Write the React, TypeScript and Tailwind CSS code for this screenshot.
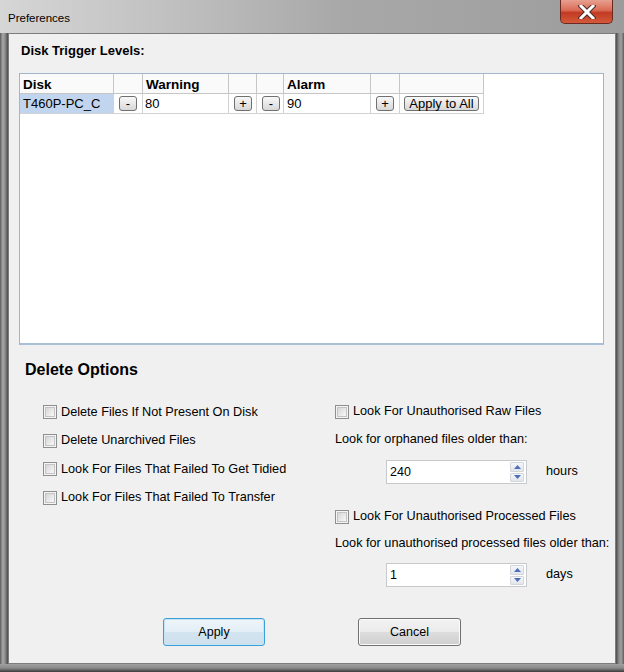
import React from "react";

function MiniBtn({ children, w }: { children: React.ReactNode; w: string }) {
  return (
    <div
      className={`${w} h-[15px] flex items-center justify-center rounded-[3px] border border-[#707070] bg-[linear-gradient(180deg,#f8f8f8_0%,#e8e8e8_50%,#d8d8d8_100%)] text-[13px] leading-none text-black`}
    >
      {children}
    </div>
  );
}

function Checkbox() {
  return (
    <div className="w-[14px] h-[14px] border border-[#8e8f8f] bg-[#f4f4f4] p-[1px] shrink-0">
      <div className="w-full h-full border border-[#c4c4c4] bg-[linear-gradient(135deg,#d6d6d6,#f8f8f8)]" />
    </div>
  );
}

function Spin({ value }: { value: string }) {
  return (
    <div className="w-[141px] h-[24px] border border-[#c7c9cd] bg-white flex items-center">
      <div className="flex-1 pl-[3px] text-[12.5px] text-black">{value}</div>
      <div className="w-[14px] h-[20px] mr-[2px] flex flex-col gap-[1px]">
        <div className="flex-1 flex items-center justify-center border border-[#d3d6db] bg-[linear-gradient(180deg,#f4f6f9,#e2e6ec)] rounded-[1px]">
          <svg width="7" height="4" viewBox="0 0 7 4">
            <path d="M0 4 L3.5 0 L7 4 Z" fill="#4c6fb8" />
          </svg>
        </div>
        <div className="flex-1 flex items-center justify-center border border-[#d3d6db] bg-[linear-gradient(180deg,#f4f6f9,#e2e6ec)] rounded-[1px]">
          <svg width="7" height="4" viewBox="0 0 7 4">
            <path d="M0 0 L3.5 4 L7 0 Z" fill="#4c6fb8" />
          </svg>
        </div>
      </div>
    </div>
  );
}

export default function App() {
  const hc = "h-[20px] border-r border-b border-[#c6c6c6] flex items-end px-[3px] text-[13.5px] font-bold leading-[16px] text-black";
  const dc = "h-[20px] border-r border-b border-[#d2d2d2] flex items-center text-[13px] text-black";
  return (
    <div className="w-[624px] h-[672px] flex flex-col overflow-hidden font-['Liberation_Sans',Arial,sans-serif] bg-[linear-gradient(90deg,#d6d6d6_0%,#c2c2c2_25%,#a8a8a8_55%,#a2a2a2_80%,#9c9c9c_100%)]">
      {/* Title bar */}
      <div className="h-[33px] flex items-start shrink-0">
        <div className="pl-[8px] pt-[10px] text-[11.5px] leading-[16px] text-black">Preferences</div>
        <div className="ml-auto mr-[11px] w-[53px] h-[24px] rounded-b-[5px] border border-t-0 border-[#6b2a20] bg-[linear-gradient(180deg,#e8a090_0%,#d96a55_45%,#c23a22_55%,#d45a3c_100%)] flex items-center justify-center">
          <svg width="18" height="14" viewBox="0 0 18 14">
            <path d="M3 1 L15 13 M15 1 L3 13" stroke="#4a2a25" strokeWidth="5" fill="none" strokeLinecap="square" />
            <path d="M3 1 L15 13 M15 1 L3 13" stroke="#ffffff" strokeWidth="3" fill="none" strokeLinecap="square" />
          </svg>
        </div>
      </div>

      {/* Body row */}
      <div className="flex flex-1">
        <div className="w-[8px] bg-[linear-gradient(90deg,#5c5c5c_0%,#a8a8a8_35%,#8a8a8a_65%,#4a4a4a_100%)]" />
        {/* Client area */}
        <div className="w-[608px] h-[631px] border border-[#7c7c7c] bg-[#f0f0f0] flex flex-col">
          <div className="pl-[12px] pt-[9px] text-[13px] font-bold leading-[16px] text-black">Disk Trigger Levels:</div>

          {/* Grid panel */}
          <div className="ml-[10px] mt-[14px] w-[585px] h-[272px] border border-[#a3b5c9] border-b-2 border-b-[#a9bfd6] bg-white">
            <div className="flex bg-[#fafafa] w-[464px]">
              <div className={`w-[94px] ${hc}`}>Disk</div>
              <div className={`w-[29px] ${hc}`} />
              <div className={`w-[86px] ${hc}`}>Warning</div>
              <div className={`w-[28px] ${hc}`} />
              <div className={`w-[27px] ${hc}`} />
              <div className={`w-[87px] ${hc}`}>Alarm</div>
              <div className={`w-[29px] ${hc}`} />
              <div className={`w-[84px] ${hc}`} />
            </div>
            <div className="flex w-[464px]">
              <div className={`w-[94px] ${dc} bg-[#c2d5ee] pl-[3px]`}>T460P-PC_C</div>
              <div className={`w-[29px] ${dc} pl-[5px]`}>
                <MiniBtn w="w-[18px]">-</MiniBtn>
              </div>
              <div className={`w-[86px] ${dc} pl-[2px]`}>80</div>
              <div className={`w-[28px] ${dc} pl-[5px]`}>
                <MiniBtn w="w-[18px]">+</MiniBtn>
              </div>
              <div className={`w-[27px] ${dc} pl-[5px]`}>
                <MiniBtn w="w-[18px]">-</MiniBtn>
              </div>
              <div className={`w-[87px] ${dc} pl-[3px]`}>90</div>
              <div className={`w-[29px] ${dc} pl-[5px]`}>
                <MiniBtn w="w-[18px]">+</MiniBtn>
              </div>
              <div className={`w-[84px] ${dc} pl-[4px]`}>
                <MiniBtn w="w-[75px]">Apply to All</MiniBtn>
              </div>
            </div>
          </div>

          <div className="pl-[16px] mt-[15px] text-[16px] font-bold leading-[19px] text-black">Delete Options</div>

          <div className="flex mt-[19px] pl-[34px] text-[12.7px] text-black">
            {/* Left column */}
            <div className="w-[292px] flex flex-col">
              {[
                "Delete Files If Not Present On Disk",
                "Delete Unarchived Files",
                "Look For Files That Failed To Get Tidied",
                "Look For Files That Failed To Transfer",
              ].map((t) => (
                <div key={t} className="h-[28.5px] flex items-center gap-[4px]">
                  <Checkbox />
                  <span>{t}</span>
                </div>
              ))}
            </div>
            {/* Right column */}
            <div className="flex flex-col">
              <div className="h-[28px] flex items-center gap-[4px]">
                <Checkbox />
                <span>Look For Unauthorised Raw Files</span>
              </div>
              <div className="h-[28px] flex items-center">Look for orphaned files older than:</div>
              <div className="mt-[6px] flex items-center pl-[51px]">
                <Spin value="240" />
                <span className="ml-[19px]">hours</span>
              </div>
              <div className="mt-[19px] h-[28px] flex items-center gap-[4px]">
                <Checkbox />
                <span>Look For Unauthorised Processed Files</span>
              </div>
              <div className="h-[26px] flex items-center">Look for unauthorised processed files older than:</div>
              <div className="mt-[6px] flex items-center pl-[51px]">
                <Spin value="1" />
                <span className="ml-[19px]">days</span>
              </div>
            </div>
          </div>

          {/* Buttons */}
          <div className="flex mt-[31px] pl-[154px] text-[12.5px] text-black">
            <div className="w-[102px] h-[28px] rounded-[3px] border border-[#3c9fd8] bg-[linear-gradient(180deg,#eef5fa_0%,#e3eef6_50%,#d2e4f0_51%,#cfe0ec_100%)] flex items-center justify-center shadow-[inset_0_0_0_1px_#c4e5f6]">
              Apply
            </div>
            <div className="ml-[93px] w-[103px] h-[28px] rounded-[3px] border border-[#707070] bg-[linear-gradient(180deg,#f2f2f2_0%,#ebebeb_50%,#dddddd_51%,#cfcfcf_100%)] flex items-center justify-center shadow-[inset_0_0_0_1px_#fbfbfb]">
              Cancel
            </div>
          </div>
        </div>
        <div className="w-[8px] bg-[linear-gradient(90deg,#4a4a4a_0%,#8a8a8a_35%,#a0a0a0_65%,#5c5c5c_100%)]" />
      </div>
      <div className="h-[8px] shrink-0 bg-[linear-gradient(180deg,#a0a0a0_0%,#8a8a8a_50%,#3a3a3a_100%)]" />
    </div>
  );
}
